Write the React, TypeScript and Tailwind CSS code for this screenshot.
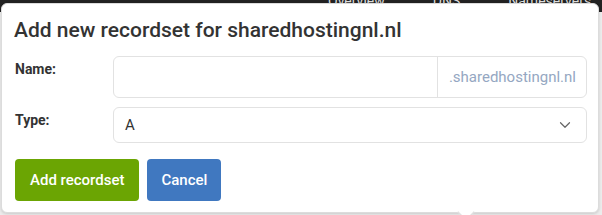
import { ChevronDown } from "lucide-react";

export default function App() {
  return (
    <div
      className="relative w-[602px] h-[215px] overflow-hidden bg-[#ececec]"
      style={{ fontFamily: "Roboto, 'Noto Sans', sans-serif" }}
    >
      {/* navbar behind the popover */}
      <div className="absolute left-0 top-0 w-full h-[12px] bg-[#222222] overflow-hidden">
        <div className="flex gap-[48px] pl-[328px] -mt-[9px] text-[14px] text-[#dddddd] whitespace-nowrap">
          <span>Overview</span>
          <span>DNS</span>
          <span>Nameservers</span>
          <span>Developer API</span>
          <span>Tools</span>
          <span>Reseller</span>
        </div>
      </div>

      <div className="absolute left-[1px] top-[3px] w-[598px] h-[210px] bg-white rounded-[6px] border border-[#dcdcdc] shadow-[0_1px_3px_rgba(0,0,0,0.15)]">
        <h2 className="pl-[12px] pt-[12px] text-[21px] leading-[28px] font-medium text-[#333333]">
          Add new recordset for sharedhostingnl.nl
        </h2>

        <div className="mt-[12px] flex flex-col gap-[9px] pl-[13px] pr-[11px]">
          <div className="flex items-start">
            <label className="w-[98px] pt-[3px] text-[14px] font-bold text-[#333333]">Name:</label>
            <div className="flex flex-1 h-[42px] rounded-[6px] border border-[#e2e2e2] overflow-hidden">
              <input className="flex-1 min-w-0 px-3 text-[14px] outline-none" />
              <div className="flex items-center pl-[11px] pr-[10px] border-l border-[#e2e2e2] text-[15px] text-[#95a7c2]">
                .sharedhostingnl.nl
              </div>
            </div>
          </div>

          <div className="flex items-start">
            <label className="w-[98px] pt-[3px] text-[14px] font-bold text-[#333333]">Type:</label>
            <div className="flex flex-1 h-[36px] items-center justify-between rounded-[6px] border border-[#e2e2e2] pl-[11px] pr-[12px]">
              <span className="text-[15px] text-[#333333]">A</span>
              <ChevronDown size={18} strokeWidth={1.6} className="text-[#666666]" />
            </div>
          </div>
        </div>

        <div className="mt-[16px] flex gap-[8px] pl-[13px]">
          <button className="h-[42px] px-[15px] rounded-[4px] bg-[#6ba503] text-white text-[15px] font-medium">
            Add recordset
          </button>
          <button className="h-[42px] px-[14px] rounded-[4px] bg-[#4078c0] text-white text-[15px] font-medium">
            Cancel
          </button>
        </div>

        {/* arrow */}
        <div className="absolute left-[458px] -bottom-[6px] w-[12px] h-[12px] rotate-45 bg-white border-r border-b border-[#dcdcdc]" />
      </div>
    </div>
  );
}
